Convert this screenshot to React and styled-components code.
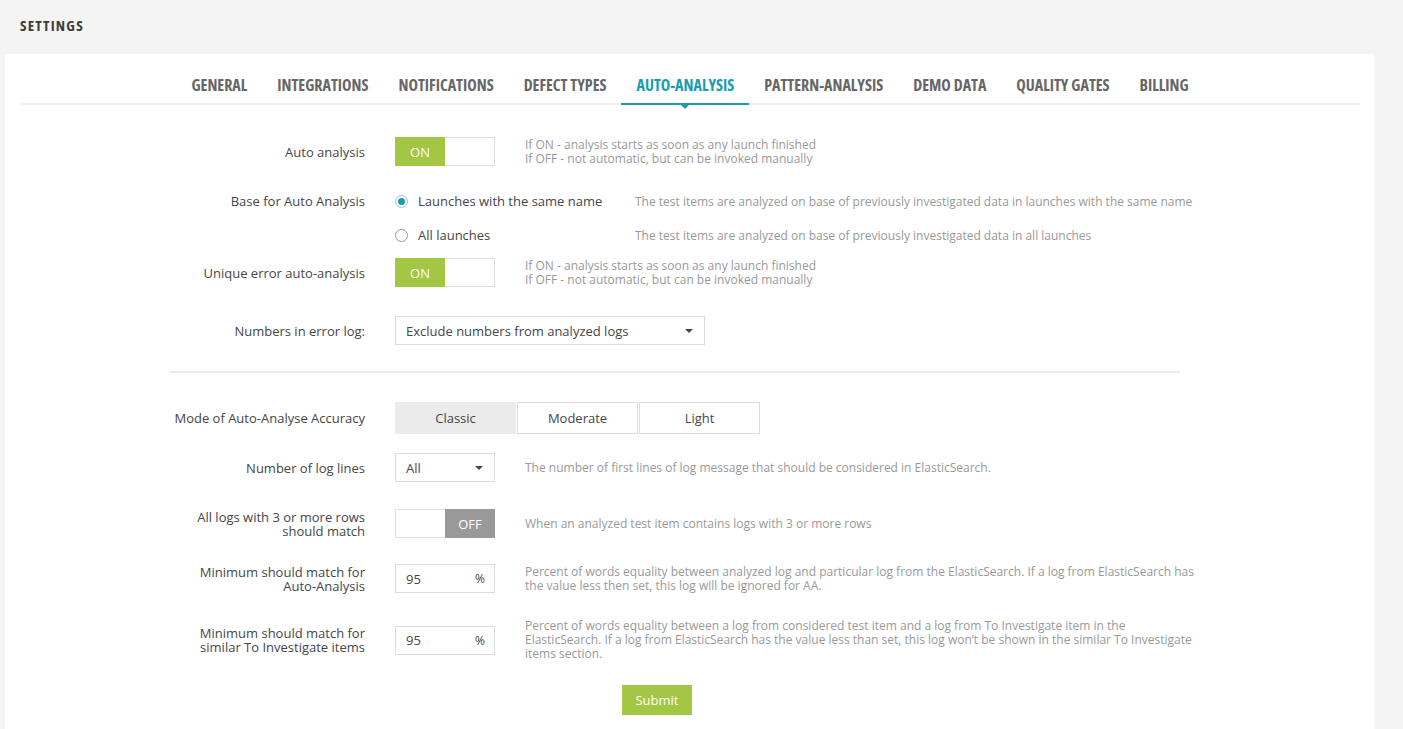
import React, { useState } from 'react'
import styled, { createGlobalStyle } from 'styled-components'

const GlobalStyle = createGlobalStyle`
  body {
    margin: 0;
    background: #f4f4f4;
    font-family: 'Open Sans', 'Liberation Sans', sans-serif;
    color: #464547;
  }
`

const Page = styled.div`
  height: 729px;
  overflow: hidden;
`

const Title = styled.h1`
  margin: 0;
  padding: 15px 20px 0;
  height: 39px;
  box-sizing: border-box;
  font-size: 15px;
  font-weight: 700;
  font-stretch: 75%;
  letter-spacing: 1.2px;
  color: #3d3d3d;
`

const Panel = styled.div`
  margin: 15px 28px 0 5px;
  background: #fff;
  padding: 0 15px 20px;
  min-height: 700px;
`

const Tabs = styled.div`
  display: flex;
  justify-content: center;
  border-bottom: 2px solid #f0f0f0;
  height: 49px;
`

const Tab = styled.div`
  position: relative;
  padding: 12px 15px 0;
  display: flex;
  align-items: center;
  font-size: 16px;
  font-weight: 700;
  font-stretch: 75%;
  color: ${p => (p.active ? '#1a9cb0' : '#666')};
  border-bottom: 2px solid ${p => (p.active ? '#1a9cb0' : 'transparent')};
  margin-bottom: -2px;

  ${p => p.active && `
    &::after {
      content: '';
      position: absolute;
      left: 50%;
      bottom: -6px;
      margin-left: -4px;
      border-left: 4px solid transparent;
      border-right: 4px solid transparent;
      border-top: 4px solid #1a9cb0;
    }
  `}
`

const Form = styled.div`
  width: 1010px;
  margin-left: 150px;
  padding-top: 32px;
`

const Row = styled.div`
  display: flex;
  align-items: ${p => (p.top ? 'flex-start' : 'center')};
  margin-bottom: ${p => p.mb || 0}px;
`

const Label = styled.div`
  width: 195px;
  flex-shrink: 0;
  text-align: right;
  font-size: 13px;
  line-height: 14px;
  margin-right: 30px;
  padding-top: ${p => p.pt || 0}px;
  color: #464547;
`

const Description = styled.div`
  margin-left: 30px;
  font-size: 12px;
  line-height: 14px;
  color: #999;
  width: 700px;
  flex-shrink: 0;
  white-space: nowrap;
`

const ToggleBox = styled.div`
  width: 100px;
  height: 29px;
  display: flex;
  flex-shrink: 0;
`

const ToggleHalf = styled.div`
  width: 50%;
  box-sizing: border-box;
  display: flex;
  align-items: center;
  justify-content: center;
  font-size: 13px;
  color: #fff;
  background: ${p => p.bg || '#fff'};
  border: 1px solid ${p => p.bg || '#e0e0e0'};
  ${p => !p.bg && (p.side === 'right' ? 'border-left: 0;' : 'border-right: 0;')}
`

const Radios = styled.div`
  display: flex;
  flex-direction: column;
  gap: 14px;
`

const RadioRow = styled.label`
  display: flex;
  align-items: center;
  height: 20px;
  font-size: 13px;
  color: #464547;
`

const RadioCircle = styled.span`
  width: 13px;
  height: 13px;
  flex-shrink: 0;
  box-sizing: border-box;
  border-radius: 50%;
  border: 1px solid ${p => (p.checked ? '#9fc4cc' : '#999')};
  display: inline-flex;
  align-items: center;
  justify-content: center;
  margin-right: 10px;

  &::after {
    content: '';
    width: 7px;
    height: 7px;
    border-radius: 50%;
    background: ${p => (p.checked ? '#1a9cb0' : 'transparent')};
  }
`

const RadioText = styled.span`
  width: 217px;
  flex-shrink: 0;
  white-space: nowrap;
`

const RadioDesc = styled.span`
  font-size: 12px;
  color: #999;
  white-space: nowrap;
`

const Select = styled.div`
  width: ${p => p.w}px;
  height: 29px;
  box-sizing: border-box;
  border: 1px solid #ddd;
  display: flex;
  align-items: center;
  justify-content: space-between;
  padding: 0 11px 0 10px;
  font-size: 13px;
  color: #464547;
  flex-shrink: 0;

  &::after {
    content: '';
    border-left: 4px solid transparent;
    border-right: 4px solid transparent;
    border-top: 4px solid #464547;
  }
`

const Divider = styled.hr`
  margin: 26px 0 29px;
  border: 0;
  border-top: 2px solid #ebebeb;
`

const Segments = styled.div`
  display: flex;
`

const Segment = styled.div`
  width: 121px;
  height: 32px;
  box-sizing: border-box;
  border: 1px solid ${p => (p.active ? '#ebebeb' : '#ddd')};
  margin-right: 1px;
  background: ${p => (p.active ? '#ebebeb' : '#fff')};
  display: flex;
  align-items: center;
  justify-content: center;
  font-size: 13px;
  color: #464547;
  cursor: pointer;
`

const InputBox = styled.div`
  width: 100px;
  height: 29px;
  box-sizing: border-box;
  border: 1px solid #ddd;
  display: flex;
  align-items: center;
  justify-content: space-between;
  padding: 0 9px 0 10px;
  font-size: 13px;
  flex-shrink: 0;
`

const Percent = styled.span`
  font-size: 12px;
`

const SubmitButton = styled.button`
  display: block;
  margin: 0 0 0 452px;
  width: 70px;
  height: 30px;
  background: #a3c644;
  border: 0;
  color: #fff;
  font-family: inherit;
  font-size: 13px;
`

const tabs = [
  'GENERAL',
  'INTEGRATIONS',
  'NOTIFICATIONS',
  'DEFECT TYPES',
  'AUTO-ANALYSIS',
  'PATTERN-ANALYSIS',
  'DEMO DATA',
  'QUALITY GATES',
  'BILLING'
]

const onOffDesc = (
  <>
    If ON - analysis starts as soon as any launch finished
    <br />
    If OFF - not automatic, but can be invoked manually
  </>
)

const Toggle = ({ on }) => (
  <ToggleBox>
    {on ? (
      <>
        <ToggleHalf bg='#a3c644'>ON</ToggleHalf>
        <ToggleHalf side='right' />
      </>
    ) : (
      <>
        <ToggleHalf side='left' />
        <ToggleHalf bg='#999'>OFF</ToggleHalf>
      </>
    )}
  </ToggleBox>
)

export default function App () {
  const [mode, setMode] = useState('Classic')

  return (
    <Page>
      <GlobalStyle />
      <Title>SETTINGS</Title>
      <Panel>
        <Tabs>
          {tabs.map(t => (
            <Tab key={t} active={t === 'AUTO-ANALYSIS'}>{t}</Tab>
          ))}
        </Tabs>
        <Form>
          <Row mb={25}>
            <Label>Auto analysis</Label>
            <Toggle on />
            <Description>{onOffDesc}</Description>
          </Row>
          <Row top mb={13}>
            <Label pt={3}>Base for Auto Analysis</Label>
            <Radios>
              <RadioRow>
                <RadioCircle checked />
                <RadioText>Launches with the same name</RadioText>
                <RadioDesc>The test items are analyzed on base of previously investigated data in launches with the same name</RadioDesc>
              </RadioRow>
              <RadioRow>
                <RadioCircle />
                <RadioText>All launches</RadioText>
                <RadioDesc>The test items are analyzed on base of previously investigated data in all launches</RadioDesc>
              </RadioRow>
            </Radios>
          </Row>
          <Row mb={29}>
            <Label>Unique error auto-analysis</Label>
            <Toggle on />
            <Description>{onOffDesc}</Description>
          </Row>
          <Row>
            <Label>Numbers in error log:</Label>
            <Select w={310}>Exclude numbers from analyzed logs</Select>
          </Row>
          <Divider />
          <Row mb={19}>
            <Label>Mode of Auto-Analyse Accuracy</Label>
            <Segments>
              {['Classic', 'Moderate', 'Light'].map(m => (
                <Segment key={m} active={m === mode} onClick={() => setMode(m)}>{m}</Segment>
              ))}
            </Segments>
          </Row>
          <Row mb={27}>
            <Label>Number of log lines</Label>
            <Select w={100}>All</Select>
            <Description>The number of first lines of log message that should be considered in ElasticSearch.</Description>
          </Row>
          <Row mb={26}>
            <Label>All logs with 3 or more rows<br />should match</Label>
            <Toggle />
            <Description>When an analyzed test item contains logs with 3 or more rows</Description>
          </Row>
          <Row mb={26}>
            <Label>Minimum should match for<br />Auto-Analysis</Label>
            <InputBox>95<Percent>%</Percent></InputBox>
            <Description>
              Percent of words equality between analyzed log and particular log from the ElasticSearch. If a log from ElasticSearch has
              <br />
              the value less then set, this log will be ignored for AA.
            </Description>
          </Row>
          <Row mb={24}>
            <Label>Minimum should match for<br />similar To Investigate items</Label>
            <InputBox>95<Percent>%</Percent></InputBox>
            <Description>
              Percent of words equality between a log from considered test item and a log from To Investigate item in the
              <br />
              ElasticSearch. If a log from ElasticSearch has the value less than set, this log won’t be shown in the similar To Investigate
              <br />
              items section.
            </Description>
          </Row>
          <SubmitButton>Submit</SubmitButton>
        </Form>
      </Panel>
    </Page>
  )
}
